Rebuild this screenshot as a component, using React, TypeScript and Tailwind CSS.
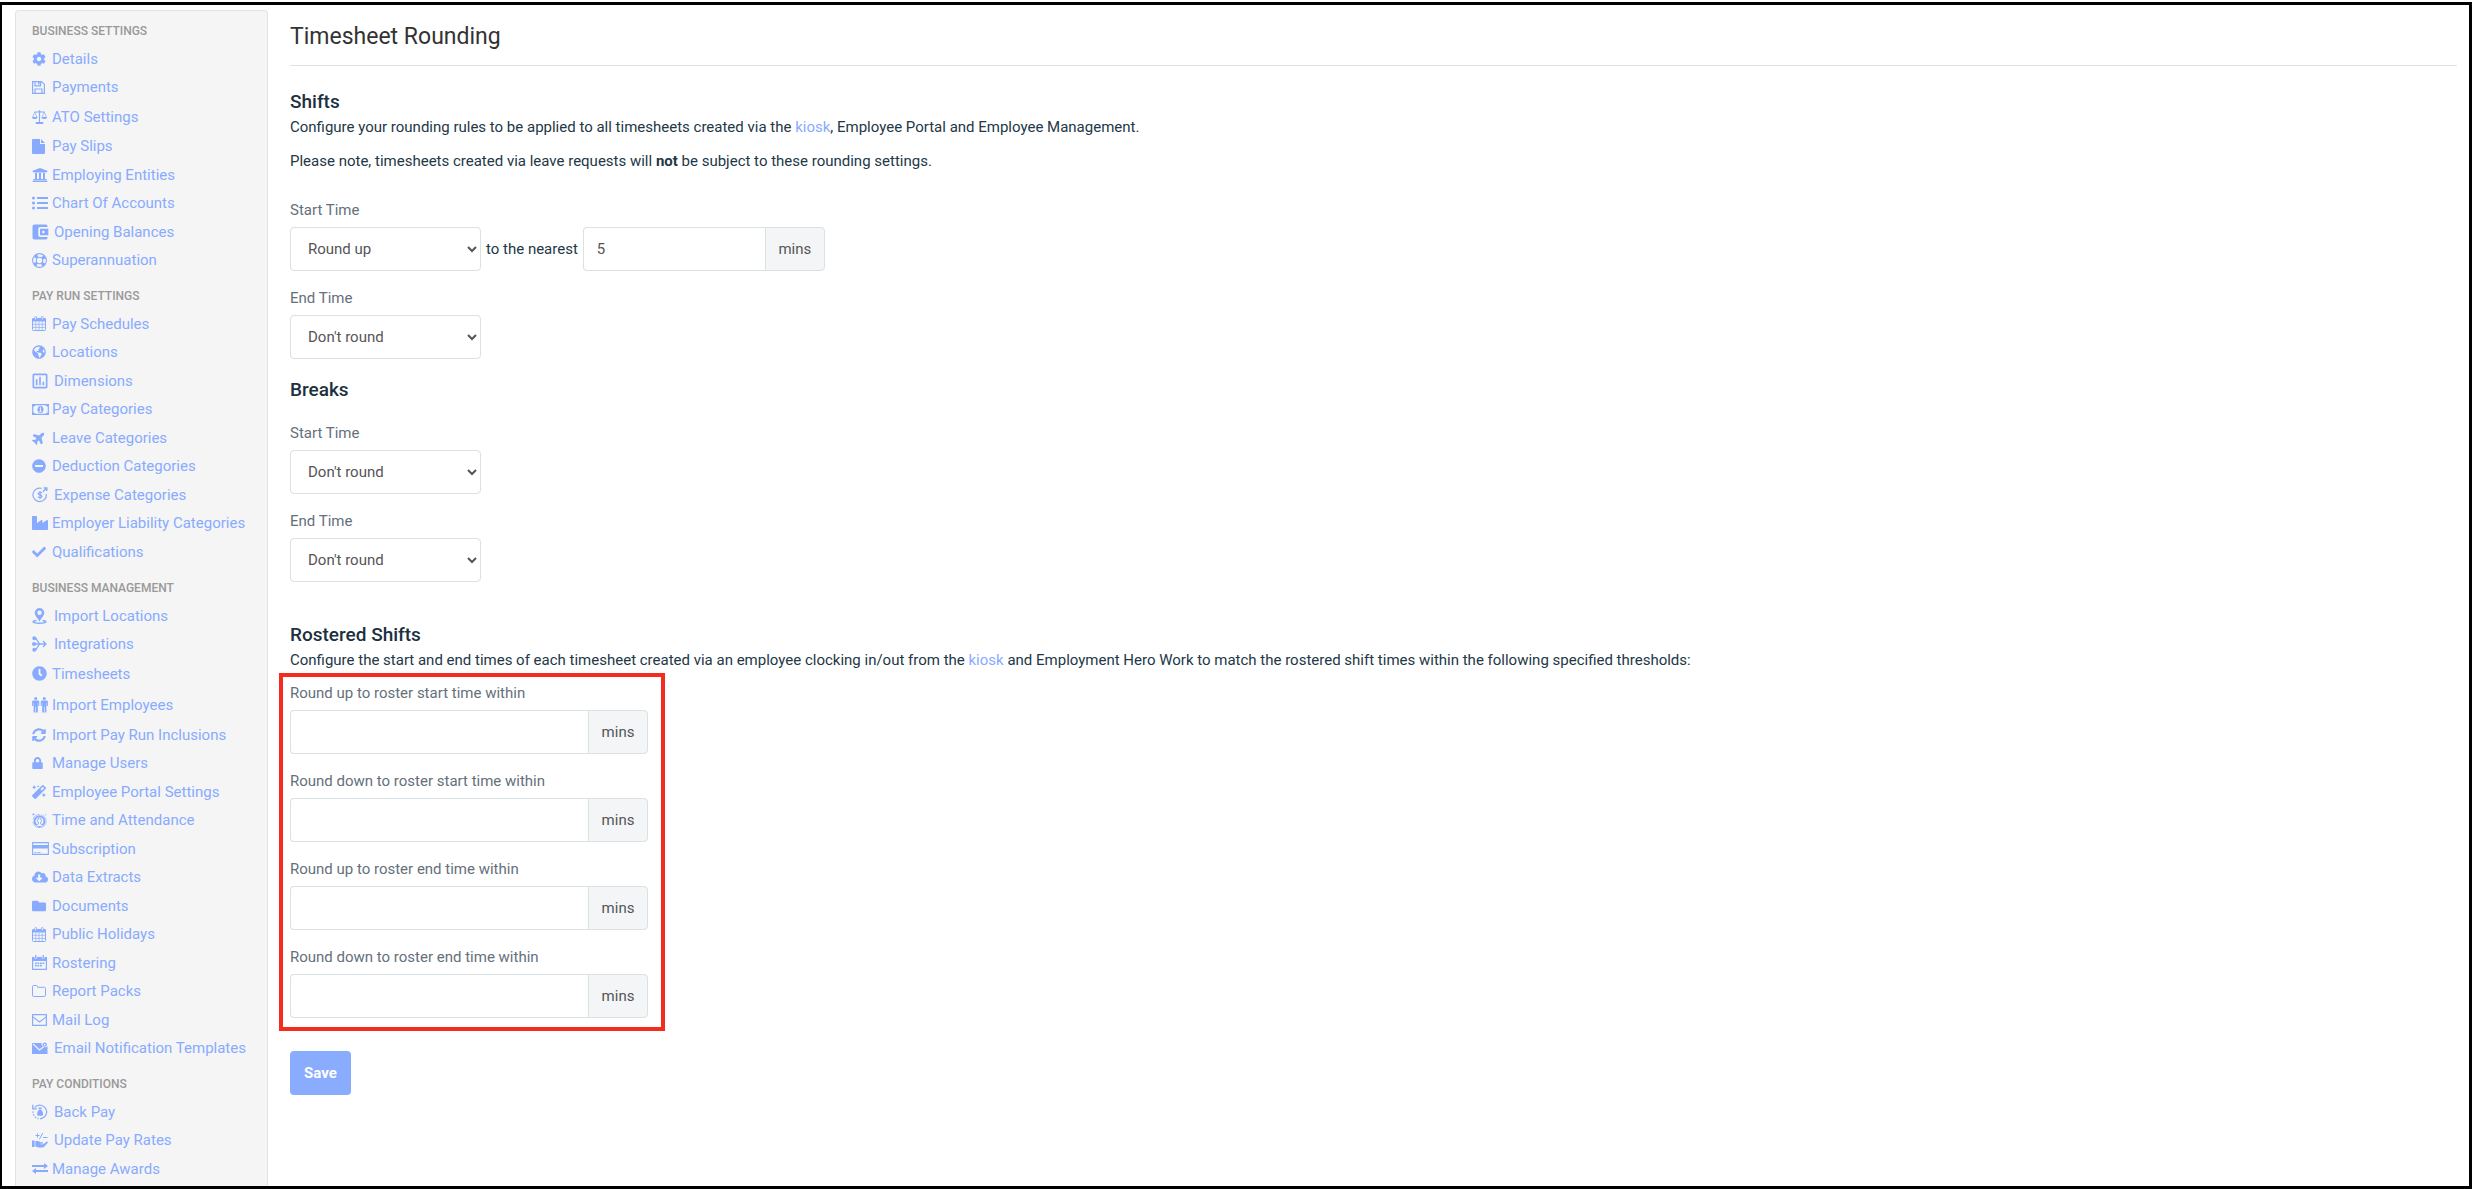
import React, { useId, useState } from 'react';
import {
  FaCheck,
  FaClock,
  FaCloudDownloadAlt,
  FaCog,
  FaFolder,
  FaGlobeAmericas,
  FaIndustry,
  FaListUl,
  FaLock,
  FaMagic,
  FaMinusCircle,
  FaPlane,
  FaSyncAlt,
  FaUniversity,
} from 'react-icons/fa';
import { MdAccountBalanceWallet, MdOutlineInsertChart } from 'react-icons/md';

type DrawingProps = { w: number; h: number; children: React.ReactNode };

function Drawing({ w, h, children }: DrawingProps) {
  return (
    <svg width={w} height={h} viewBox={`0 0 ${w} ${h}`} fill="none" stroke="currentColor" aria-hidden="true">
      {children}
    </svg>
  );
}

const SaveIcon = () => (
  <Drawing w={13} h={13}>
    <path d="M.6.6h9l2.800 2.800v9H.6z M3 12.400V8h7v4.400 M3 .6v4.200h5.600V.6" strokeWidth="1.200" />
    <path d="M6 .6h1.600v3H6z" fill="currentColor" stroke="none" />
  </Drawing>
);

const ScalesIcon = () => (
  <Drawing w={15} h={14}>
    <path d="M7.500 1v12 M2.500 2h10 M3.500 13h8" strokeWidth="1.200" />
    <path d="M2.800 2 .7 7 M2.800 2l2 5 M12.200 2l-2 5 M12.200 2l2.100 5" strokeWidth=".7" />
    <path d="M0 7h5.500a2.750 2 0 0 1-5.500 0z M9.500 7H15a2.750 2 0 0 1-5.500 0z M7.500 0l1.300 1.400-1.300 1.400-1.300-1.400z M4 12h7v2H4z" fill="currentColor" stroke="none" />
  </Drawing>
);

const FileIcon = () => (
  <Drawing w={13} h={15}>
    <path d="M1 0h7v5h5v9a1 1 0 0 1-1 1H1a1 1 0 0 1-1-1V1a1 1 0 0 1 1-1z M9 0l4 4H9z" fill="currentColor" stroke="none" />
  </Drawing>
);

const LifeRingIcon = () => (
  <Drawing w={15} h={15}>
    <circle cx="7.500" cy="7.500" r="6.900" strokeWidth="1.100" />
    <circle cx="7.500" cy="7.500" r="3.200" strokeWidth="1.100" />
    <circle cx="7.500" cy="7.500" r="5.200" strokeWidth="3.400" strokeDasharray="3.200 4.968" strokeDashoffset="-2.480" />
  </Drawing>
);

const CalendarIcon = () => (
  <Drawing w={14} h={15}>
    <path d="M.5 3v10.700a.8.8 0 0 0 .8.800h11.400a.8.8 0 0 0 .8-.800V3" />
    <path d="M0 3.200A1.200 1.200 0 0 1 1.200 2h11.600A1.200 1.200 0 0 1 14 3.200V5.500H0z" fill="currentColor" stroke="none" />
    <path d="M1 8.300h12 M1 11.400h12 M3.800 5.500v9 M7 5.500v9 M10.200 5.500v9" strokeWidth=".7" />
    <rect x="2.800" y=".5" width="1.800" height="3.300" rx=".9" fill="#f5f5f5" strokeWidth=".9" />
    <rect x="9.400" y=".5" width="1.800" height="3.300" rx=".9" fill="#f5f5f5" strokeWidth=".9" />
  </Drawing>
);

const MoneyIcon = () => (
  <Drawing w={17} h={11}>
    <path d="M.7.700h15.600v9.600H.7z" strokeWidth="1.200" />
    <path d="M0 0h3.600a2.600 2.600 0 0 1-2.600 2.600H0z M17 0h-3.600a2.600 2.600 0 0 0 2.600 2.600h1z M0 11h3.600a2.600 2.600 0 0 0-2.600-2.600H0z M17 11h-3.600a2.600 2.600 0 0 1 2.600-2.600h1z" fill="currentColor" stroke="none" />
    <ellipse cx="8.500" cy="5.500" rx="3" ry="3.500" fill="currentColor" stroke="none" />
    <path d="M7.500 4.300l1-.8v3.700 M7.200 7.400h2.600" stroke="#f5f5f5" strokeWidth=".9" />
  </Drawing>
);

const ExpenseIcon = () => (
  <Drawing w={16} h={16}>
    <path d="M9.500 1.400A6.700 6.700 0 1 0 14.300 7" strokeWidth="1.200" />
    <path d="M10.800 4.800l3.600-3.600 M11.600.9h3.200v3.200" strokeWidth="1.400" />
    <path d="M9.800 6.200c-.4-.9-3.600-1.200-3.700.5 0 1.600 3.800.9 3.800 2.700 0 1.600-3.400 1.500-3.900.2 M8 4v8.200" strokeWidth="1.200" />
  </Drawing>
);

const PinIcon = () => (
  <Drawing w={15} h={16}>
    <path d="M7.500 0a4.800 4.800 0 0 1 4.800 4.800c0 3-2.800 5-4.800 9-2-4-4.800-6-4.800-9A4.800 4.800 0 0 1 7.500 0z M7.500 2.600a2.200 2.200 0 1 0 0 4.400 2.200 2.200 0 0 0 0-4.400z" fill="currentColor" fillRule="evenodd" stroke="none" />
    <path d="M4.500 12.600c-5 .6-5 2.600 3 2.600s8-2 3-2.600" strokeWidth="1.500" />
  </Drawing>
);

const MergeIcon = () => (
  <Drawing w={15} h={16}>
    <path d="M2.500 2.200h1.300L7.500 8l-3.700 5.800H2.500 M2 8h12 M11 5l3 3-3 3" strokeWidth="1.300" />
    <path d="M2.300.2a2 2 0 1 1 0 4 2 2 0 0 1 0-4z M2 6a2 2 0 1 1 0 4 2 2 0 0 1 0-4z M2.300 11.800a2 2 0 1 1 0 4 2 2 0 0 1 0-4z" fill="currentColor" stroke="none" />
  </Drawing>
);

const PeopleIcon = () => (
  <Drawing w={16} h={16}>
    <circle cx="3.700" cy="1.500" r="1.500" fill="currentColor" stroke="none" />
    <circle cx="12.300" cy="1.500" r="1.500" fill="currentColor" stroke="none" />
    <path d="M1 3.500h5.400l.9 1V9H6.200V5.800h-.4V15.500H4V10h-.6v5.500H1.600V5.800h-.4V9H.1V4.500z M9.600 3.500H15l.9 1V9h-1.100V5.800h-.4V15.500h-1.800V10H12v5.500h-1.800V5.800h-.4V9H8.700V4.500z" fill="currentColor" stroke="none" />
  </Drawing>
);

const AttendanceIcon = () => (
  <Drawing w={15} h={15}>
    <circle cx="7.500" cy="8" r="6.600" strokeWidth=".6" strokeDasharray="9 2" />
    <path d="M4.600 12.200A5 5 0 1 1 10.400 12.200" strokeWidth="2" />
    <path d="M5.600 7.500a1.900 2.400 0 0 1 3.800 0c0 1.200-.4 1.800-.8 2.400v.9l2 1.400 M4.400 12.200l2-1.400v-.9c-.4-.6-.8-1.200-.8-2.400" strokeWidth="1" />
    <path d="M0 1.300 1.500.2l1.300 1.100-1.300 1.300z M13 1l1.500.8-.8 1z M4.500 13h6L7.500 15z" fill="currentColor" stroke="none" />
  </Drawing>
);

const CardIcon = () => (
  <Drawing w={17} h={13}>
    <path d="M.6.6h15.800v11.800H.6z" strokeWidth="1.100" />
    <path d="M.5 3h16v3.500H.5z" fill="currentColor" stroke="none" />
    <path d="M2.500 10.500h2 M5.500 10.500H8.500" strokeWidth=".9" />
  </Drawing>
);

const RosterIcon = () => (
  <Drawing w={15} h={15}>
    <path d="M.6 2.600h13.800v11.800H.6z" strokeWidth="1.200" />
    <path d="M0 2h15v4H0z" fill="currentColor" stroke="none" />
    <path d="M3 8.300h9.500 M3 10.600h7" strokeWidth="1.600" strokeDasharray="1.800 .7" />
    <path d="M3.800 0v3.500 M11.200 0v3.500" stroke="#f5f5f5" strokeWidth="2.600" />
    <path d="M3.800 0v3.300 M11.200 0v3.300" strokeWidth="1.300" />
  </Drawing>
);

const OutlineFolderIcon = () => (
  <Drawing w={14} h={12}>
    <path d="M.5 1.700A1.200 1.200 0 0 1 1.700.5h2.600a1.200 1.200 0 0 1 1.200 1.200v.6h6.800a1.200 1.200 0 0 1 1.200 1.200v6.800a1.200 1.200 0 0 1-1.200 1.200H1.700A1.200 1.200 0 0 1 .5 10.300z" />
  </Drawing>
);

const MailIcon = () => (
  <Drawing w={15} h={12}>
    <path d="M.6.6h13.800v10.800H.6z M.6 2.600l6.900 5.400 6.900-5.400" strokeWidth="1.200" />
  </Drawing>
);

const MailGearIcon = () => (
  <Drawing w={16} h={12}>
    <path d="M0 1h9.500a3.500 3.500 0 0 0 6 3V12H0z" fill="currentColor" stroke="none" />
    <path d="M1 2l6.500 6L12 4.500" stroke="#f5f5f5" strokeWidth="1.100" />
    <circle cx="12.800" cy="2.600" r="1.500" strokeWidth="1.300" />
  </Drawing>
);

const BackPayIcon = () => (
  <Drawing w={16} h={16}>
    <path d="M2.600 3.600A6.800 6.800 0 1 1 8 14.800" strokeWidth="1.200" />
    <path d="M1 7.500a7 7 0 0 0 5.500 7.200" strokeWidth="1.300" strokeDasharray="1.500 1.300" />
    <path d="M.8.8v4h4" strokeWidth="1.300" />
    <path d="M6.200 3.600h3.800l-.8 1.800h-2.200z M6.800 6.100h2.600c1.400 1.400 2.400 5 1 5.600H5.800c-1.400-.6-.4-4.200 1-5.600z" fill="currentColor" stroke="none" />
  </Drawing>
);

const RatesIcon = () => (
  <Drawing w={16} h={15}>
    <path d="M3.500 2.500h4 M5.500.5v4 M10.800 0 7.300 6.300 M11 4.500h4.500" strokeWidth="1" />
    <path d="M0 7.500h2.600V14H0z M3.400 8h2.400c1.200 0 1.800 1.200 3 1.200h1.600c1 0 1 1.500 0 1.600H7.800v.4h3.400l3.200-2.500c.9-.6 1.900.4 1.200 1.200L12.200 13.700c-.5.500-1 .8-1.800.8H7c-1.500 0-2-.9-3.600-.9z" fill="currentColor" stroke="none" />
  </Drawing>
);

const SwapIcon = () => (
  <Drawing w={16} h={11}>
    <path d="M0 3h12.500 M3.500 8h12.500" strokeWidth="1.800" />
    <path d="M12 0l4 3-4 3z M4 5 0 8l4 3z" fill="currentColor" stroke="none" />
  </Drawing>
);

type NavItem = { label: string; icon: React.ReactNode; wide?: boolean; tall?: boolean };

const groups: { title: string; items: NavItem[] }[] = [
  {
    title: 'BUSINESS SETTINGS',
    items: [
      { label: 'Details', icon: <FaCog className="size-[14px]" /> },
      { label: 'Payments', icon: <SaveIcon /> },
      { label: 'ATO Settings', icon: <ScalesIcon />, tall: true },
      { label: 'Pay Slips', icon: <FileIcon /> },
      { label: 'Employing Entities', icon: <FaUniversity className="size-4" /> },
      { label: 'Chart Of Accounts', icon: <FaListUl className="size-4" /> },
      { label: 'Opening Balances', icon: <MdAccountBalanceWallet className="-ml-0.5 size-5" />, wide: true },
      { label: 'Superannuation', icon: <LifeRingIcon /> },
    ],
  },
  {
    title: 'PAY RUN SETTINGS',
    items: [
      { label: 'Pay Schedules', icon: <CalendarIcon /> },
      { label: 'Locations', icon: <FaGlobeAmericas className="size-[14px]" /> },
      { label: 'Dimensions', icon: <MdOutlineInsertChart className="-ml-0.5 size-5" />, wide: true },
      { label: 'Pay Categories', icon: <MoneyIcon /> },
      { label: 'Leave Categories', icon: <FaPlane className="size-[14px] -rotate-45" /> },
      { label: 'Deduction Categories', icon: <FaMinusCircle className="size-[14px]" /> },
      { label: 'Expense Categories', icon: <ExpenseIcon />, wide: true },
      { label: 'Employer Liability Categories', icon: <FaIndustry className="size-4" /> },
      { label: 'Qualifications', icon: <FaCheck className="size-[14px]" /> },
    ],
  },
  {
    title: 'BUSINESS MANAGEMENT',
    items: [
      { label: 'Import Locations', icon: <PinIcon />, wide: true },
      { label: 'Integrations', icon: <MergeIcon />, wide: true },
      { label: 'Timesheets', icon: <FaClock className="size-[15px]" />, tall: true },
      { label: 'Import Employees', icon: <PeopleIcon />, tall: true },
      { label: 'Import Pay Run Inclusions', icon: <FaSyncAlt className="size-[14px]" /> },
      { label: 'Manage Users', icon: <FaLock className="h-3 w-[11px]" /> },
      { label: 'Employee Portal Settings', icon: <FaMagic className="size-[14px]" /> },
      { label: 'Time and Attendance', icon: <AttendanceIcon /> },
      { label: 'Subscription', icon: <CardIcon /> },
      { label: 'Data Extracts', icon: <FaCloudDownloadAlt className="size-4" /> },
      { label: 'Documents', icon: <FaFolder className="size-[14px]" /> },
      { label: 'Public Holidays', icon: <CalendarIcon /> },
      { label: 'Rostering', icon: <RosterIcon /> },
      { label: 'Report Packs', icon: <OutlineFolderIcon /> },
      { label: 'Mail Log', icon: <MailIcon /> },
      { label: 'Email Notification Templates', icon: <MailGearIcon />, wide: true },
    ],
  },
  {
    title: 'PAY CONDITIONS',
    items: [
      { label: 'Back Pay', icon: <BackPayIcon />, wide: true },
      { label: 'Update Pay Rates', icon: <RatesIcon />, wide: true },
      { label: 'Manage Awards', icon: <SwapIcon /> },
    ],
  },
];

function Sidebar() {
  return (
    <nav
      aria-label="Settings"
      className="mt-[5px] ml-[13px] flex w-[253px] shrink-0 flex-col gap-[10px] overflow-hidden rounded-t-[4px] border border-b-0 border-[#e3e3e3] bg-[#f5f5f5] pt-2 pl-4"
    >
      {groups.map((group) => (
        <section key={group.title} className="shrink-0">
          <h2 className="text-xs leading-[25px] font-medium text-[#999]">{group.title}</h2>
          <ul>
            {group.items.map((item) => (
              <li
                key={item.label}
                className={item.tall ? 'flex h-[31px] items-center' : 'flex items-center odd:h-[29px] even:h-7'}
              >
                <a href="#" className="flex items-center whitespace-nowrap text-[#88abff]">
                  <span className={item.wide ? 'flex w-[22px] shrink-0' : 'flex w-5 shrink-0'}>{item.icon}</span>
                  {item.label}
                </a>
              </li>
            ))}
          </ul>
        </section>
      ))}
    </nav>
  );
}

const labelClass = 'mb-[5px] block w-fit text-[#66707b]';

function RoundingField({ label, initial }: { label: string; initial: string }) {
  const id = useId();
  const [mode, setMode] = useState(initial);
  const [minutes, setMinutes] = useState('5');
  return (
    <div>
      <label htmlFor={id} className={labelClass}>
        {label}
      </label>
      <div className="flex items-center gap-[5px]">
        <select
          id={id}
          value={mode}
          onChange={(e) => setMode(e.target.value)}
          className="h-11 w-[191px] rounded-[4px] border border-[#d9e1e4] bg-white px-[13px] text-[#555]"
        >
          <option>Don't round</option>
          <option>Round up</option>
          <option>Round down</option>
        </select>
        {mode !== "Don't round" && (
          <>
            <label htmlFor={`${id}-minutes`}>to the nearest</label>
            <div className="flex w-[242px]">
              <MinutesInput id={`${id}-minutes`} value={minutes} onChange={setMinutes} />
            </div>
          </>
        )}
      </div>
    </div>
  );
}

type MinutesInputProps = { id: string; value: string; onChange: (value: string) => void };

function MinutesInput({ id, value, onChange }: MinutesInputProps) {
  return (
    <>
      <input
        id={id}
        type="text"
        value={value}
        onChange={(e) => onChange(e.target.value)}
        className="h-11 min-w-0 flex-1 rounded-l-[4px] border border-r-0 border-[#d9e1e4] bg-white px-[13px] text-[#555]"
      />
      <span className="flex h-11 w-[60px] items-center justify-center rounded-r-[4px] border border-[#d9e1e4] bg-[#f3f5f7] text-[#555]">
        mins
      </span>
    </>
  );
}

function ThresholdField({ label }: { label: string }) {
  const id = useId();
  const [value, setValue] = useState('');
  return (
    <div>
      <label htmlFor={id} className={labelClass}>
        {label}
      </label>
      <div className="flex w-[358px]">
        <MinutesInput id={id} value={value} onChange={setValue} />
      </div>
    </div>
  );
}

const headingClass = 'text-[19px] leading-[26px] font-medium text-[#1c3040]';

export default function App() {
  return (
    <div className="h-screen bg-white pt-0.5 pr-0.5 font-['Roboto',sans-serif] text-[15px] leading-6">
      <div className="flex h-full overflow-hidden border-[3px] border-l-2 border-black">
        <Sidebar />
        <main className="ml-[22px] min-w-0 flex-1 pt-4 pr-3 text-[#233746]">
          <h1 className="border-b border-[#e3e3e3] pb-3 text-[23px] leading-8 text-[#333]">Timesheet Rounding</h1>

          <h3 className={`mt-[23px] ${headingClass}`}>Shifts</h3>
          <p>
            Configure your rounding rules to be applied to all timesheets created via the{' '}
            <a href="#" className="text-[#88abff]">
              kiosk
            </a>
            , Employee Portal and Employee Management.
          </p>
          <p className="mt-[10px]">
            Please note, timesheets created via leave requests will <b className="font-bold">not</b> be subject to these
            rounding settings.
          </p>
          <div className="mt-[25px] flex flex-col gap-[15px]">
            <RoundingField label="Start Time" initial="Round up" />
            <RoundingField label="End Time" initial="Don't round" />
          </div>

          <h3 className={`mt-[18px] ${headingClass}`}>Breaks</h3>
          <div className="mt-[18px] flex flex-col gap-[15px]">
            <RoundingField label="Start Time" initial="Don't round" />
            <RoundingField label="End Time" initial="Don't round" />
          </div>

          <h3 className={`mt-10 ${headingClass}`}>Rostered Shifts</h3>
          <p>
            Configure the start and end times of each timesheet created via an employee clocking in/out from the{' '}
            <a href="#" className="text-[#88abff]">
              kiosk
            </a>{' '}
            and Employment Hero Work to match the rostered shift times within the following specified thresholds:
          </p>
          <div className="mt-px -ml-[11px] flex w-fit flex-col gap-[15px] border-4 border-[#f42c1f] pt-1 pr-[13px] pb-[9px] pl-[7px]">
            <ThresholdField label="Round up to roster start time within" />
            <ThresholdField label="Round down to roster start time within" />
            <ThresholdField label="Round up to roster end time within" />
            <ThresholdField label="Round down to roster end time within" />
          </div>
          <button type="button" className="mt-5 h-11 rounded-[4px] bg-[#8aacff] px-[14px] font-bold text-white">
            Save
          </button>
        </main>
      </div>
    </div>
  );
}
